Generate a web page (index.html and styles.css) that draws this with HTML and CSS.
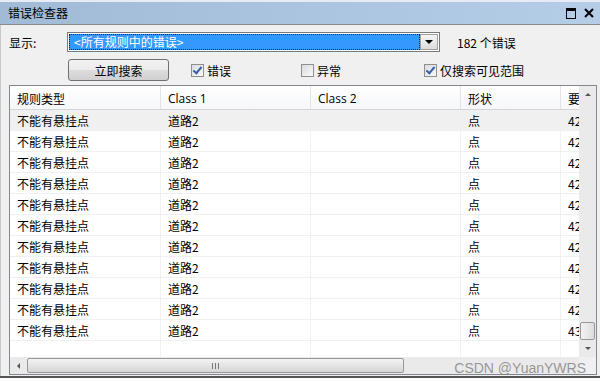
FILE: index.html
```html
<!DOCTYPE html>
<html lang="zh">
<head>
  <meta charset="UTF-8" />
  <title>错误检查器</title>
  <link rel="stylesheet" href="styles.css">
</head>
<body>
  <div class="window">
    <div class="titlebar">
      <span class="title">错误检查器</span>
      <span class="tb-icons">
        <span class="tb-max"></span>
        <svg class="tb-close" width="10" height="10" viewBox="0 0 10 10"><path d="M1 1 L9 9 M9 1 L1 9" stroke="#000" stroke-width="2"/></svg>
      </span>
    </div>

    <div class="content">
      <div class="row row-show">
        <span class="lbl">显示:</span>
        <div class="combo">
          <div class="combo-val"><span>&lt;所有规则中的错误&gt;</span></div>
          <div class="combo-btn"><span class="tri"></span></div>
        </div>
        <span class="count">182 个错误</span>
      </div>

      <div class="row row-opts">
        <button class="btn">立即搜索</button>
        <label class="chk chk-err"><span class="box on"></span>错误</label>
        <label class="chk chk-exc"><span class="box"></span>异常</label>
        <label class="chk chk-vis"><span class="box on"></span>仅搜索可见范围</label>
      </div>

      <div class="grid">
        <div class="grid-main">
          <div class="table">
            <div class="tr head">
              <div class="td c1">规则类型</div>
              <div class="td c2">Class 1</div>
              <div class="td c3">Class 2</div>
              <div class="td c4">形状</div>
              <div class="td c5">要</div>
            </div>
            <div class="tr sel"><div class="td c1">不能有悬挂点</div><div class="td c2">道路2</div><div class="td c3"></div><div class="td c4">点</div><div class="td c5">42</div></div>
            <div class="tr"><div class="td c1">不能有悬挂点</div><div class="td c2">道路2</div><div class="td c3"></div><div class="td c4">点</div><div class="td c5">42</div></div>
            <div class="tr"><div class="td c1">不能有悬挂点</div><div class="td c2">道路2</div><div class="td c3"></div><div class="td c4">点</div><div class="td c5">42</div></div>
            <div class="tr"><div class="td c1">不能有悬挂点</div><div class="td c2">道路2</div><div class="td c3"></div><div class="td c4">点</div><div class="td c5">42</div></div>
            <div class="tr"><div class="td c1">不能有悬挂点</div><div class="td c2">道路2</div><div class="td c3"></div><div class="td c4">点</div><div class="td c5">42</div></div>
            <div class="tr"><div class="td c1">不能有悬挂点</div><div class="td c2">道路2</div><div class="td c3"></div><div class="td c4">点</div><div class="td c5">42</div></div>
            <div class="tr"><div class="td c1">不能有悬挂点</div><div class="td c2">道路2</div><div class="td c3"></div><div class="td c4">点</div><div class="td c5">42</div></div>
            <div class="tr"><div class="td c1">不能有悬挂点</div><div class="td c2">道路2</div><div class="td c3"></div><div class="td c4">点</div><div class="td c5">42</div></div>
            <div class="tr"><div class="td c1">不能有悬挂点</div><div class="td c2">道路2</div><div class="td c3"></div><div class="td c4">点</div><div class="td c5">42</div></div>
            <div class="tr"><div class="td c1">不能有悬挂点</div><div class="td c2">道路2</div><div class="td c3"></div><div class="td c4">点</div><div class="td c5">42</div></div>
            <div class="tr"><div class="td c1">不能有悬挂点</div><div class="td c2">道路2</div><div class="td c3"></div><div class="td c4">点</div><div class="td c5">43</div></div>
            <div class="tr empty"><div class="td c1"></div><div class="td c2"></div><div class="td c3"></div><div class="td c4"></div><div class="td c5"></div></div>
          </div>
          <div class="vscroll">
            <span class="arrow up"></span>
            <span class="vtrack"><span class="vthumb"></span></span>
            <span class="arrow down"></span>
          </div>
        </div>
        <div class="hscroll">
          <span class="arrow left"></span>
          <span class="hthumb"><span class="grip"></span></span>
          <span class="hrest"></span>
          <span class="corner"></span>
        </div>
      </div>
    </div>
    <div class="watermark">CSDN @YuanYWRS</div>
  </div>
</body>
</html>
```

FILE: styles.css
```css
html, body {
  margin: 0;
  padding: 0;
  background: #fff;
}

body {
  font-family: "Noto Sans CJK SC", "Noto Sans", sans-serif;
  font-size: 12px;
  color: #000;
}

.window {
  position: relative;
  width: 600px;
  height: 378px;
  background: #f0f0f0;
  border-bottom: 2px solid #555;
  box-sizing: border-box;
  display: flex;
  flex-direction: column;
}

.titlebar {
  height: 25px;
  border-top: 2px solid #e6ecf3;
  box-sizing: border-box;
  background: linear-gradient(to right, #a1bad6, #b5cde7);
  display: flex;
  align-items: center;
  justify-content: space-between;
  padding: 0 6px 0 8px;
  border-bottom: 1px solid #8a8a8a;
}

.title {
  line-height: 16px;
}

.tb-icons {
  display: flex;
  align-items: center;
  gap: 8px;
}

.tb-max {
  width: 8px;
  height: 7px;
  border: 1.5px solid #000;
  border-top-width: 3px;
}

.content {
  flex: 1;
  display: flex;
  flex-direction: column;
  padding: 7px 4px 0 8px;
  border-left: 1px solid #c8c8c8;
}

.row {
  display: flex;
  align-items: center;
}

.row-show {
  height: 20px;
}

.lbl {
  width: 58px;
}

.combo {
  width: 373px;
  height: 20px;
  box-sizing: border-box;
  border: 1px solid #7a7a7a;
  background: #fff;
  display: flex;
  padding: 1px;
}

.combo-val {
  flex: 1;
  background: #3399ff;
  border: 1px dotted #222;
  color: #fff;
  display: flex;
  align-items: center;
  padding-left: 4px;
  line-height: 14px;
}

.combo-btn {
  width: 16px;
  border: 1px solid #a0a0a0;
  background: linear-gradient(#f5f5f5, #dcdcdc);
  display: flex;
  align-items: center;
  justify-content: center;
}

.tri {
  border-left: 4px solid transparent;
  border-right: 4px solid transparent;
  border-top: 4px solid #000;
}

.count {
  margin-left: 17px;
}

.row-opts {
  height: 22px;
  margin-top: 7px;
}

.btn {
  margin-left: 59px;
  width: 101px;
  height: 22px;
  border: 1px solid #707070;
  border-radius: 3px;
  background: linear-gradient(#f2f2f2 0%, #ebebeb 50%, #dddddd 51%, #cfcfcf 100%);
  font-family: inherit;
  font-size: 12px;
  padding: 0;
}

.chk {
  display: flex;
  align-items: center;
  gap: 3px;
}

.chk-err { margin-left: 22px; }
.chk-exc { margin-left: 70px; }
.chk-vis { margin-left: 83px; }

.box {
  width: 11px;
  height: 11px;
  border: 1px solid #8e8f8f;
  background: linear-gradient(135deg, #d9dbde, #f9f9f9);
  position: relative;
}

.box.on::after {
  content: "";
  position: absolute;
  left: 3px;
  top: 0px;
  width: 3px;
  height: 7px;
  border-right: 2px solid #3a5fa8;
  border-bottom: 2px solid #3a5fa8;
  transform: rotate(40deg);
}

.grid {
  margin-top: 4px;
  width: 588px;
  height: 290px;
  box-sizing: border-box;
  border: 1px solid #828790;
  background: #fff;
  display: flex;
  flex-direction: column;
}

.grid-main {
  flex: 1;
  display: flex;
  overflow: hidden;
}

.table {
  flex: 1;
  overflow: hidden;
  display: flex;
  flex-direction: column;
}

.tr {
  display: flex;
  height: 21px;
  flex-shrink: 0;
  border-bottom: 1px solid #f0f0f0;
  box-sizing: border-box;
}

.tr.head {
  height: 24px;
  background: linear-gradient(#ffffff, #f6f7f9);
  border-bottom: 1px solid #d5d5d5;
}

.tr.sel {
  background: #f0f0f0;
}

.tr.empty {
  flex: 1;
  border-bottom: 0;
}

.td {
  flex-shrink: 0;
  box-sizing: border-box;
  border-right: 1px solid #f0f0f0;
  padding-left: 7px;
  display: flex;
  align-items: center;
  white-space: nowrap;
  overflow: hidden;
}

.head .td {
  border-right: 1px solid #e3e4e6;
  padding-top: 1px;
}

.td.c1 { width: 151px; }
.td.c2 { width: 150px; font-family: "Noto Sans CJK SC", "Open Sans", sans-serif; }
.td.c3 { width: 150px; }
.td.c4 { width: 100px; }
.td.c5 { width: 40px; border-right: 0; }

.head .td.c2, .head .td.c3 {
  font-family: "Open Sans", "Noto Sans CJK SC", sans-serif;
}

.vscroll {
  width: 17px;
  background: #eaeaea;
  display: flex;
  flex-direction: column;
  align-items: center;
}

.arrow {
  width: 17px;
  height: 17px;
  display: flex;
  align-items: center;
  justify-content: center;
  flex-shrink: 0;
}

.arrow.up::before {
  content: "";
  border-left: 3px solid transparent;
  border-right: 3px solid transparent;
  border-bottom: 3px solid #555;
}

.arrow.down::before {
  content: "";
  border-left: 3px solid transparent;
  border-right: 3px solid transparent;
  border-top: 3px solid #555;
}

.arrow.left::before {
  content: "";
  border-top: 3px solid transparent;
  border-bottom: 3px solid transparent;
  border-right: 3px solid #555;
}

.vtrack {
  flex: 1;
  width: 17px;
  display: flex;
  flex-direction: column;
  justify-content: flex-end;
  align-items: center;
}

.vthumb {
  width: 13px;
  height: 16px;
  border: 1px solid #989898;
  border-radius: 2px;
  background: linear-gradient(to right, #f3f3f3, #dcdcdc);
}

.hscroll {
  height: 17px;
  display: flex;
  align-items: center;
  background: #eaeaea;
}

.hthumb {
  width: 375px;
  height: 13px;
  border: 1px solid #989898;
  border-radius: 2px;
  background: linear-gradient(#f3f3f3, #d6d6d6);
  display: flex;
  align-items: center;
  justify-content: center;
}

.grip {
  width: 5px;
  height: 6px;
  border-left: 1px solid #777;
  border-right: 1px solid #777;
  position: relative;
}

.grip::after {
  content: "";
  position: absolute;
  left: 2px;
  top: 0;
  width: 1px;
  height: 6px;
  background: #777;
}

.hrest {
  flex: 1;
}

.corner {
  width: 17px;
  height: 17px;
  background: #f0f0f0;
}

.watermark {
  position: absolute;
  right: 14px;
  bottom: 0;
  font-family: "Liberation Sans", Arial, sans-serif;
  font-size: 14px;
  color: rgba(120, 120, 120, 0.75);
}
```
